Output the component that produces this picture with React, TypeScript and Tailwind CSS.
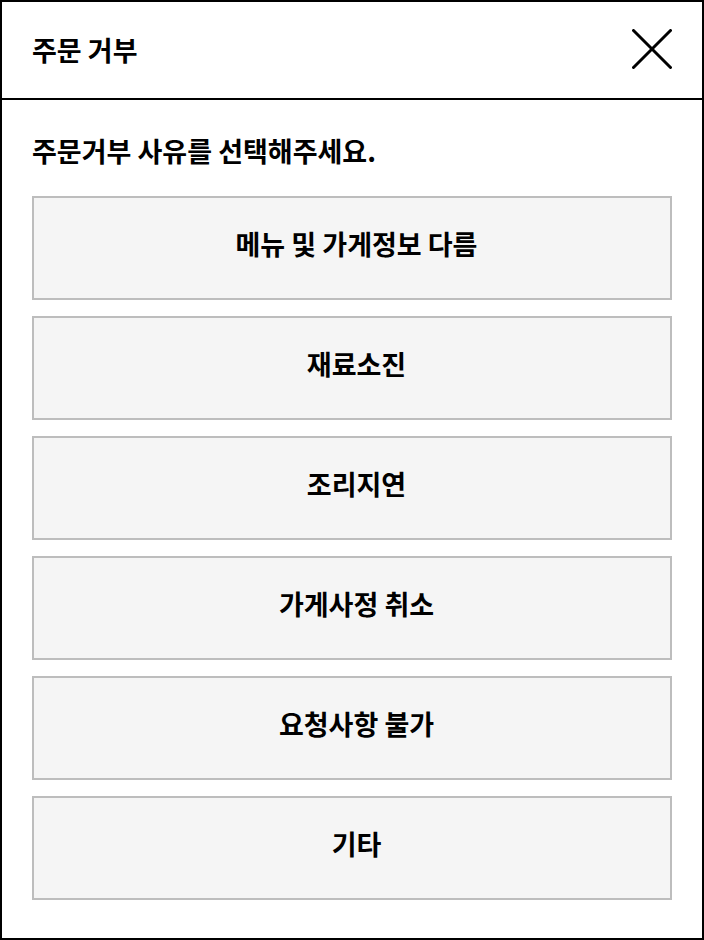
const reasons = ['메뉴 및 가게정보 다름', '재료소진', '조리지연', '가게사정 취소', '요청사항 불가', '기타'];

export default function App() {
    return (
        <div
            className="w-[704px] h-[940px] border-2 border-black bg-white text-black flex flex-col"
            style={{ fontFamily: '"Noto Sans CJK KR", "Noto Sans", sans-serif' }}
        >
            <div className="h-[98px] shrink-0 flex items-center justify-between pl-[30px] pr-[30px] pb-[2px] border-b-2 border-black">
                <h1 className="text-[27px] font-bold leading-none">주문 거부</h1>
                <button className="w-10 h-10 flex items-center justify-center">
                    <svg width="40" height="40" viewBox="0 0 40 40" fill="none" stroke="black" strokeWidth="3" strokeLinecap="round">
                        <path d="M1.5 1.5L38.5 38.5" />
                        <path d="M38.5 1.5L1.5 38.5" />
                    </svg>
                </button>
            </div>
            <div className="flex-1 px-[30px] pt-[35px]">
                <p className="text-[27px] font-bold leading-[32px]">주문거부 사유를 선택해주세요.</p>
                <div className="mt-[29px] flex flex-col gap-4">
                    {reasons.map((r) => (
                        <button
                            key={r}
                            className="h-[104px] w-full bg-[#f5f5f5] border-2 border-[#bdbdbd] flex items-center justify-center pl-[9px] pb-[8px] text-[27px] font-bold"
                        >
                            {r}
                        </button>
                    ))}
                </div>
            </div>
        </div>
    );
}
